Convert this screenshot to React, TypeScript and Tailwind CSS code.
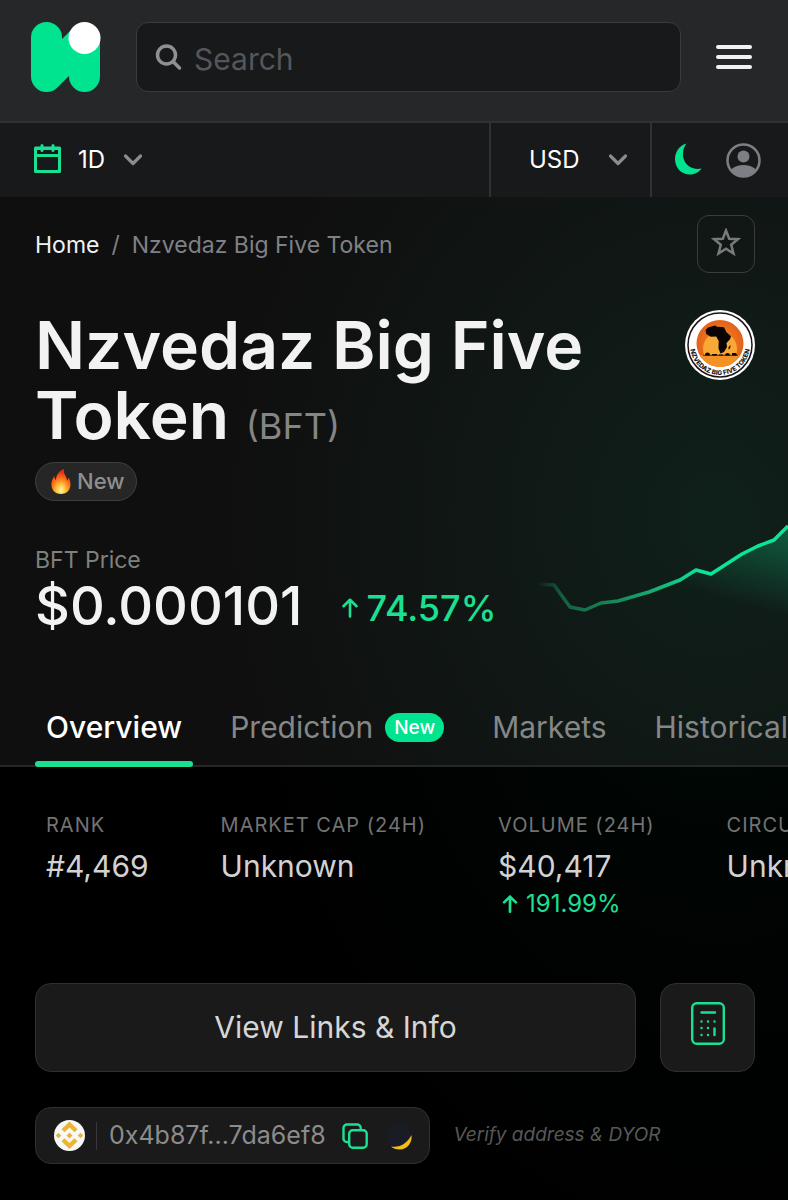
import React, { useState } from 'react';

type PropsStat = {
    label: string;
    value: string;
    change?: string;
}

type PropsPicker = {
    id: string;
    label: string;
    options: string[];
    widthClass: string;
}

const tabs = [
    { name: 'Overview', isNew: false },
    { name: 'Prediction', isNew: true },
    { name: 'Markets', isNew: false },
    { name: 'Historical', isNew: false },
];

const stats: PropsStat[] = [
    { label: 'Rank', value: '#4,469' },
    { label: 'Market Cap (24h)', value: 'Unknown' },
    { label: 'Volume (24h)', value: '$40,417', change: '191.99%' },
    { label: 'Circulating Supply', value: 'Unknown' },
];

const Logo = () => (
    <svg width="70" height="70" viewBox="0 0 70 70" aria-hidden="true">
        <path d="M15.500 15.500V54.500L53.500 16.500V54.500" fill="none" stroke="#00e38f" strokeWidth="31" strokeLinecap="round" strokeLinejoin="round" />
        <circle cx="53.500" cy="16" r="16" fill="#fff" />
    </svg>
);

const Chevron = () => (
    <svg width="20" height="14" viewBox="0 0 20 14" fill="none" stroke="#8b8c90" strokeWidth="3.2" strokeLinecap="round" strokeLinejoin="round" aria-hidden="true" className="pointer-events-none col-start-1 row-start-1 self-center justify-self-end">
        <path d="M2.500 3l7.500 7.500L17.500 3" />
    </svg>
);

const Picker = ({ id, label, options, widthClass }: PropsPicker) => (
    <div className={`grid ${widthClass}`}>
        <label htmlFor={id} className="sr-only">{label}</label>
        <select id={id} className="col-start-1 row-start-1 h-10 w-full appearance-none bg-transparent text-2xl text-white outline-none">
            {options.map((option) => <option key={option}>{option}</option>)}
        </select>
        <Chevron />
    </div>
);

const ArrowUp = ({ className }: { className: string }) => (
    <svg viewBox="0 0 16 20" fill="none" stroke="#1be092" strokeLinecap="round" strokeLinejoin="round" className={className} aria-hidden="true">
        <path d="M8 18.500V1.800M1.500 8.200L8 1.800l6.500 6.400" />
    </svg>
);

const Flame = () => (
    <svg width="20" height="25" viewBox="0 0 20 25" aria-hidden="true">
        <defs>
            <radialGradient id="flame" cx="0.5" cy="0.85" r="0.75">
                <stop offset="0" stopColor="#fff6b0" />
                <stop offset="0.3" stopColor="#ffc83d" />
                <stop offset="0.6" stopColor="#ff7a1a" />
                <stop offset="1" stopColor="#e62a12" />
            </radialGradient>
        </defs>
        <path d="M13 0c-5 2-8 6-8 11-1-1-1.500-2-1.500-4C1 10 0 13 .5 17c.6 5 4.500 8 9.500 8 6 0 9.500-4 9.500-9.500 0-3-1-5.500-2-7-.3 1.500-.8 2.500-1.500 3C16 7 12 5 13 0z" fill="url(#flame)" />
    </svg>
);

const TokenLogo = () => (
    <svg viewBox="0 0 70 70" className="size-[70px] shrink-0" role="img" aria-label="Nzvedaz Big Five Token logo">
        <defs>
            <path id="ring" d="M5 35A30 30 0 0 0 65 35" />
            <radialGradient id="sun">
                <stop offset="0.4" stopColor="#f07a1c" />
                <stop offset="1" stopColor="#e2621a" />
            </radialGradient>
            <clipPath id="disc"><circle cx="35" cy="33.500" r="23.500" /></clipPath>
        </defs>
        <circle cx="35" cy="35" r="35" fill="#fff" />
        <circle cx="35" cy="35" r="32" fill="none" stroke="#1c1216" strokeWidth="1.500" />
        <circle cx="35" cy="33.500" r="23.500" fill="url(#sun)" />
        <circle cx="35" cy="39" r="17" fill="#f9a836" />
        <g clipPath="url(#disc)">
            <path d="M11 45.500q24-2 48 0v12H11z" fill="#f39125" />
        </g>
        <path d="M23 17.500L30 15.500l2 1.200 7 .5 2.500 5 4.500 4-1 3-3.500 3.800.5 4-3 5-3.500 1.500-2-5 .2-7.500-2.500-4.500-5.500.2-4.500-2.700-.7-4z" fill="#0a0504" />
        <path d="M43.500 37.500l2-2.800-.3 3.200-1.500 1.800z" fill="#0a0504" />
        <path d="M20 45.500q0-3 2.500-3t2.500 3zM27 44h5v1.500h-5zM34 44.500h4v1h-4zM40 45.500q0-2.500 2.500-2.500t2.500 2.500zM47 43h4l1 2.500h-5z" fill="#0a0504" />
        <path d="M18 45.300h35" stroke="#0a0504" strokeWidth="0.7" />
        <text fontSize="6.5" fontWeight="800" fill="#1a1a1a" textAnchor="middle">
            <textPath href="#ring" startOffset="50%">NZVEDAZ BIG FIVE TOKEN</textPath>
        </text>
    </svg>
);

const PriceChart = () => (
    <svg width="251" height="130" viewBox="0 0 251 130" fill="none" aria-hidden="true" className="-mr-[33px] shrink-0">
        <defs>
            <linearGradient id="line" x1="0" x2="1" y1="0" y2="0">
                <stop offset="0" stopColor="#1be092" stopOpacity="0" />
                <stop offset="0.1" stopColor="#1be092" stopOpacity="0.35" />
                <stop offset="0.4" stopColor="#1be092" stopOpacity="0.65" />
                <stop offset="0.65" stopColor="#0be598" />
            </linearGradient>
            <linearGradient id="area" gradientUnits="userSpaceOnUse" x1="251" x2="226" y1="14" y2="98">
                <stop offset="0" stopColor="#10e596" stopOpacity="0.32" />
                <stop offset="1" stopColor="#10e596" stopOpacity="0" />
            </linearGradient>
        </defs>
        <path d="M0 72L17 73 33 95 48 98 64 91 81 89 112 80 143 68 159 58 174 62 205 42 221 34 237 28 251 14V110H0z" fill="url(#area)" />
        <path d="M0 72L17 73 33 95 48 98 64 91 81 89 112 80 143 68 159 58 174 62 205 42 221 34 237 28 251 14" stroke="url(#line)" strokeWidth="3.500" strokeLinejoin="round" />
    </svg>
);

const Stat = ({ label, value, change }: PropsStat) => (
    <div className="flex flex-col whitespace-nowrap">
        <dt className="text-xl leading-6 tracking-wider text-[#737373] uppercase">{label}</dt>
        <dd className="mt-[11px] text-[30px] leading-9 text-[#d2d2d2]">{value}</dd>
        {change && (
            <dd className="mt-1 flex items-center gap-2 pl-1 text-2xl leading-8 text-[#1be092]">
                <ArrowUp className="h-[18px] w-4 stroke-3" />{change}
            </dd>
        )}
    </div>
);

const Header = () => (
    <header>
        <div className="flex h-[123px] items-start gap-[35px] border-b-2 border-[#303133] bg-[#262729] pt-[22px] pr-9 pl-[31px]">
            <a href="#home" aria-label="Home"><Logo /></a>
            <div className="flex h-[70px] flex-1 items-center gap-3 rounded-xl border border-[#3a3b3d] bg-[#18191b] px-[18px]">
                <svg width="27" height="27" viewBox="0 0 27 27" fill="none" stroke="#8f9092" strokeWidth="3.500" strokeLinecap="round" aria-hidden="true" className="shrink-0">
                    <circle cx="11.500" cy="11" r="9" />
                    <path d="M18 17.500l6.500 6.500" />
                </svg>
                <input type="search" aria-label="Search" placeholder="Search" className="w-full min-w-0 bg-transparent pt-1 text-[30px] text-white outline-none placeholder:text-[#55565a]" />
            </div>
            <button type="button" aria-label="Menu" className="flex h-[70px] flex-col justify-center gap-[6px]">
                <span className="h-1 w-9 rounded-full bg-[#f1f2f6]" />
                <span className="h-1 w-9 rounded-full bg-[#f1f2f6]" />
                <span className="h-1 w-9 rounded-full bg-[#f1f2f6]" />
            </button>
        </div>
        <div className="flex h-[74px] items-stretch bg-[#18191b]">
            <div className="flex flex-1 items-center gap-[17px] pl-[34px]">
                <svg width="27" height="34" viewBox="0 0 27 34" fill="none" stroke="#1be092" strokeWidth="3" strokeLinejoin="round" strokeLinecap="round" aria-hidden="true">
                    <path d="M1.500 5h24v23.500h-24zM1.500 12.500h24M8 2.500v5M19 2.500v5" />
                    <path d="M3 5.500h21" />
                </svg>
                <Picker id="period" label="Period" options={['1D', '7D', '1M']} widthClass="w-[65px]" />
            </div>
            <div className="flex items-center border-l-2 border-[#303133] pr-[22px] pl-[38px]">
                <Picker id="currency" label="Currency" options={['USD', 'EUR', 'GBP']} widthClass="w-[99px]" />
            </div>
            <div className="flex items-center gap-6 border-l-2 border-[#303133] pr-[27px] pl-[22px]">
                <button type="button" aria-label="Dark mode">
                    <svg width="28" height="34" viewBox="0 0 28 34" aria-hidden="true">
                        <path d="M12.500 0.500C4.500 3 1 9.500 1 16c0 9 6.500 15.500 15 15.500 5 0 9-2.500 11.500-6C16 28 8 19.500 9 9.500c.3-3.500 1.500-6.500 3.500-9z" fill="#00e38f" />
                    </svg>
                </button>
                <button type="button" aria-label="Account">
                    <svg width="35" height="35" viewBox="0 0 35 35" aria-hidden="true">
                        <defs><clipPath id="face"><circle cx="17.500" cy="17.500" r="16" /></clipPath></defs>
                        <circle cx="17.500" cy="17.500" r="16" fill="none" stroke="#7d7f85" strokeWidth="2.500" />
                        <circle cx="17.500" cy="13.500" r="6" fill="#7d7f85" />
                        <ellipse cx="17.500" cy="32" rx="15" ry="10" fill="#7d7f85" clipPath="url(#face)" />
                    </svg>
                </button>
            </div>
        </div>
    </header>
);

const App = () => {

    const [activeTab, setActiveTab] = useState('Overview');

    return (
        <div className="min-h-screen overflow-hidden bg-black font-['Inter','Liberation_Sans',sans-serif]">
            <Header />
            <main className="bg-[radial-gradient(ellipse_500px_760px_at_91%_320px,#000c08_0%,#000403_50%,#000000_100%)] pb-9">
                <section className="bg-[radial-gradient(ellipse_500px_560px_at_91%_320px,#0f201a_0%,#101715_50%,#0f0f0f_100%)] pt-[18px] pr-[33px] pl-[35px]">
                    <div className="flex items-center justify-between">
                        <nav aria-label="Breadcrumb" className="flex gap-3 pt-[2px] text-[23px] leading-8 text-[#808186]">
                            <a href="#home" className="text-[#f2f2f2]">Home</a>
                            <span>/</span>
                            <span>Nzvedaz Big Five Token</span>
                        </nav>
                        <button type="button" aria-label="Add to favourites" className="flex size-[58px] items-center justify-center rounded-xl border border-[#3b3d3d]">
                            <svg width="30" height="32" viewBox="0 1 30 32" fill="none" stroke="#797b7b" strokeWidth="2.500" aria-hidden="true">
                                <path d="M15 3.500l3.200 8.200 8.800.5-6.800 5.600 2.300 8.700-7.500-4.800-7.500 4.800 2.300-8.700L3 12.200l8.800-.5z" />
                            </svg>
                        </button>
                    </div>

                    <div className="mt-[37px] flex items-start justify-between">
                        <h1 className="flex-1 text-[66px] leading-[70px] font-semibold text-[#f2f2f2]">
                            Nzvedaz Big Five Token <span className="text-4xl leading-none font-normal text-[#858585]">(BFT)</span>
                        </h1>
                        <TokenLogo />
                    </div>
                    <p className="mt-3 flex h-[39px] w-fit items-center gap-[6px] rounded-full border border-[#3f3f3f] bg-[#262626] pr-3 pl-[15px] text-[22px] font-medium text-[#8f8f8f]">
                        <Flame />New
                    </p>

                    <div className="mt-[11px] flex justify-between">
                        <div className="pt-8">
                            <p className="text-[23px] leading-8 text-[#7f8080]">BFT Price</p>
                            <div className="flex items-center gap-10">
                                <p className="text-[54px] leading-[60px] font-medium text-[#f2f2f2]">$0.000101</p>
                                <p className="flex items-center gap-2 pt-1 text-4xl font-medium text-[#1be092]">
                                    <ArrowUp className="h-5 w-4 stroke-[2.6]" />74.57%
                                </p>
                            </div>
                        </div>
                        <PriceChart />
                    </div>

                    <nav aria-label="Token sections" className="-mr-[33px] -ml-[35px] mt-[47px] flex gap-[26px] border-b-2 border-[#252827] pl-[35px]">
                        {tabs.map((tab) => (
                            <a
                                key={tab.name}
                                href={`#${tab.name.toLowerCase()}`}
                                onClick={() => setActiveTab(tab.name)}
                                className={tab.name === activeTab
                                    ? 'relative flex h-[76px] items-center px-[11px] text-[30px] font-medium text-white after:absolute after:inset-x-0 after:-bottom-[2px] after:h-[6px] after:rounded-full after:bg-[#1be092]'
                                    : 'flex h-[76px] items-center gap-3 px-[11px] text-[30px] text-[#858787]'}
                            >
                                {tab.name}
                                {tab.isNew && <span className="rounded-full bg-[#00e38f] px-[9px] text-[19px] leading-[29px] font-medium text-white">New</span>}
                            </a>
                        ))}
                    </nav>
                </section>

                <dl className="flex h-[216px] gap-[72px] pt-[46px] pl-[46px]">
                    {stats.map((stat) => <Stat key={stat.label} {...stat} />)}
                </dl>

                <div className="flex gap-6 pr-[33px] pl-[35px]">
                    <button type="button" className="h-[89px] flex-1 rounded-2xl border border-[#303030] bg-[#1a1a1a] text-[30px] text-[#d6d6d6]">View Links &amp; Info</button>
                    <button type="button" aria-label="Calculator" className="flex h-[89px] w-[95px] justify-center rounded-2xl border border-[#303030] bg-[#1a1a1a] pt-[18px]">
                        <svg width="34" height="43" viewBox="0 0 34 43" fill="none" stroke="#1be092" strokeWidth="2.400" strokeLinecap="round" aria-hidden="true">
                            <rect x="1.200" y="1.200" width="31.600" height="40.600" rx="4.500" />
                            <path d="M10.500 10.500h13.500M23.500 26.500v6.500" />
                            <path d="M10.500 19.500h.01M17 19.500h.01M23.500 19.500h.01M10.500 26h.01M17 26h.01M10.500 33h.01M17 33h.01" />
                        </svg>
                    </button>
                </div>

                <div className="mt-[35px] flex items-center gap-6 pr-[33px] pl-[35px]">
                    <div className="flex h-[57px] items-center rounded-2xl border border-[#303030] bg-[#1a1a1a] pr-4 pl-[18px]">
                        <svg width="31" height="31" viewBox="0 0 31 31" aria-hidden="true">
                            <circle cx="15.500" cy="15.500" r="15.500" fill="#f8f8f8" />
                            <path d="M15.500 1.500l8 7.800-3 3-5-4.800-5 4.800-3-3zM15.500 29l-8-7.800 3-3 5 4.800 5-4.800 3 3zM15.500 12.500l3 3-3 3-3-3zM4.500 12.700l2.800 2.800-2.800 2.800-2.800-2.800zM26.500 12.700l2.800 2.800-2.800 2.800-2.800-2.800z" fill="#ecb52f" />
                        </svg>
                        <span className="ml-[11px] h-7 w-px bg-[#383838]" />
                        <span className="ml-3 text-[25px] text-[#8c8c8c]">0x4b87f...7da6ef8</span>
                        <button type="button" aria-label="Copy address" className="ml-4">
                            <svg width="26" height="26" viewBox="0 0 26 26" fill="none" stroke="#1be092" strokeWidth="2.400" strokeLinejoin="round" aria-hidden="true">
                                <rect x="7.200" y="7.200" width="17.500" height="17.500" rx="3.500" />
                                <path d="M7 19H5.500A3.500 3.500 0 0 1 1.500 15V5A3.500 3.500 0 0 1 5 1.500H15A3.500 3.500 0 0 1 18.700 5v2" />
                            </svg>
                        </button>
                        <svg width="28" height="28" viewBox="0 0 28 28" className="ml-[17px]" aria-hidden="true">
                            <circle cx="13.500" cy="13.500" r="12.500" fill="#191b25" />
                            <path d="M6 24.500c9 1.500 16.500-3.500 20.500-11.500 1 8-4.500 14.500-11.500 14.500-4 0-7-1.200-9-3z" fill="#f2bc1b" />
                        </svg>
                    </div>
                    <p className="text-[19px] text-[#585858] italic">Verify address &amp; DYOR</p>
                </div>
            </main>
        </div>
    );
};

export default App;
